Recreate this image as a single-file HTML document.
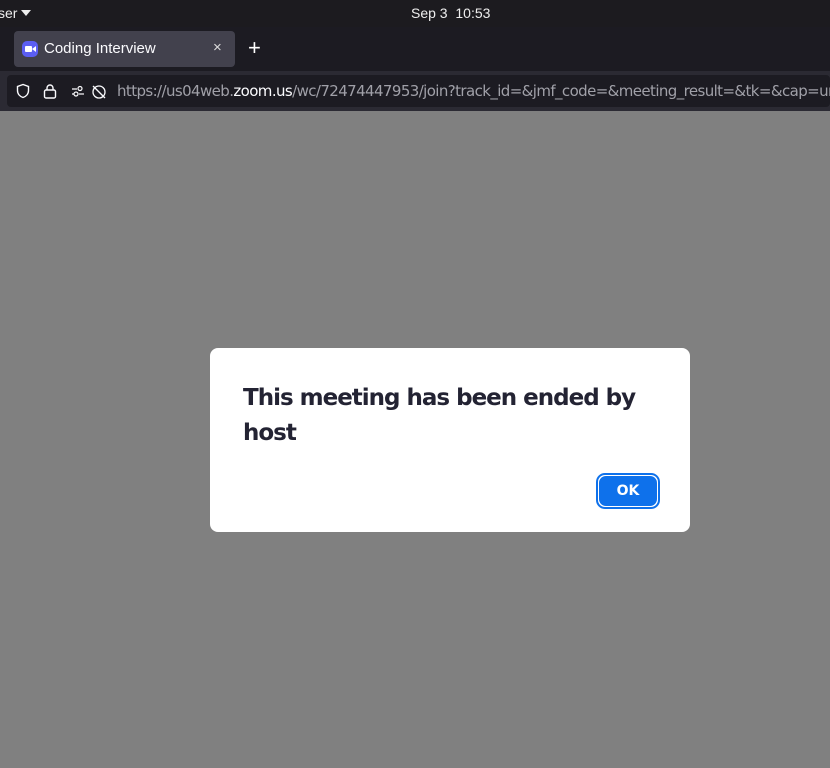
<!DOCTYPE html>
<html><head><style>
*{margin:0;padding:0;box-sizing:border-box}
body{width:830px;height:768px;overflow:hidden;background:#808080;font-family:"Liberation Sans","DejaVu Sans",sans-serif;position:relative}
.top{position:absolute;left:0;top:0;width:830px;height:27px;background:#1c1b1f;color:#fff;font-size:14px}
.tabs{position:absolute;left:0;top:27px;width:830px;height:44px;background:#1c1b22}
.tab{position:absolute;left:14px;top:4px;width:221px;height:36px;background:#42414d;border-radius:4px;color:#fbfbfe;font-size:15px}
.nav{position:absolute;left:0;top:71px;width:830px;height:40px;background:#2b2a33}
.url{position:absolute;left:7px;top:4px;width:823px;height:32px;background:#1c1b22;border-radius:4px}
.dlg{position:absolute;left:210px;top:348px;width:480px;height:184px;background:#fff;border-radius:8px}
.dlg h1{position:absolute;left:33px;top:33px;width:420px;font-size:23px;line-height:35px;font-weight:bold;color:#232333;font-family:"DejaVu Sans","Liberation Sans",sans-serif;letter-spacing:-1px}
.ok{position:absolute;left:386px;top:125px;width:64px;height:36px;border:2px solid #0e71eb;border-radius:9px;background:#fff;padding:1px}
.ok div{width:100%;height:100%;background:#0e71eb;border-radius:7px;color:#fff;font-weight:bold;font-size:14px;text-align:center;line-height:30px;font-family:"DejaVu Sans",sans-serif}
</style></head><body>
<div class="top">
<span style="position:absolute;left:-2px;top:5px;color:#eee">ser</span>
<svg style="position:absolute;left:21px;top:10px" width="10" height="6"><path d="M0 0h10L5 6z" fill="#eee"/></svg>
<span style="position:absolute;left:411px;top:5px;color:#eee">Sep 3&nbsp; 10:53</span>
</div>
<div class="tabs"><div class="tab">
<div style="position:absolute;left:8px;top:10px;width:16px;height:16px;border-radius:5px;background:#5b5ef2"></div>
<svg style="position:absolute;left:11px;top:14px" width="11" height="8"><rect x="0" y="1" width="7" height="6" rx="1" fill="#fff"/><path d="M7 4l4-3v6z" fill="#fff"/></svg>
<span style="position:absolute;left:30px;top:9px">Coding Interview</span>
<span style="position:absolute;left:199px;top:8px;font-size:15px;color:#ddd">×</span>
</div>
<span style="position:absolute;left:248px;top:9px;color:#fff;font-size:22px;line-height:24px">+</span>
</div>
<div class="nav"><div class="url">
<svg style="position:absolute;left:8px;top:8px" width="16" height="16"><path d="M8 1.5L2.5 3.5v4c0 3.5 2.5 6 5.5 7 3-1 5.5-3.5 5.5-7v-4z" fill="none" stroke="#fbfbfe" stroke-width="1.4"/></svg>
<svg style="position:absolute;left:36px;top:8px" width="14" height="16"><rect x="1.5" y="7" width="11" height="8" rx="1.5" fill="none" stroke="#fbfbfe" stroke-width="1.4"/><path d="M4 7V5a3 3 0 016 0v2" fill="none" stroke="#fbfbfe" stroke-width="1.4"/></svg>
<svg style="position:absolute;left:64px;top:10px" width="40" height="14"><path d="M1 4h5M1 9h2" stroke="#fbfbfe" stroke-width="1.2"/><circle cx="9" cy="3.5" r="2" fill="none" stroke="#fbfbfe" stroke-width="1.2"/><circle cx="5" cy="9" r="2" fill="none" stroke="#fbfbfe" stroke-width="1.2"/><path d="M8 9h5" stroke="#fbfbfe" stroke-width="1.2"/><circle cx="28" cy="7" r="6" fill="none" stroke="#fbfbfe" stroke-width="1.3"/><path d="M22 1l12 12" stroke="#fbfbfe" stroke-width="1.3"/></svg>
<span style="position:absolute;left:110px;top:7px;font-size:15px;color:#a0a0a8;white-space:nowrap;font-family:'DejaVu Sans',sans-serif;letter-spacing:-0.6px">https://us04web.<span style="color:#fbfbfe">zoom.us</span>/wc/72474447953/join?track_id=&amp;jmf_code=&amp;meeting_result=&amp;tk=&amp;cap=un</span>
</div></div>
<div class="dlg"><h1>This meeting has been ended by host</h1><div class="ok"><div>OK</div></div></div>
</body></html>
